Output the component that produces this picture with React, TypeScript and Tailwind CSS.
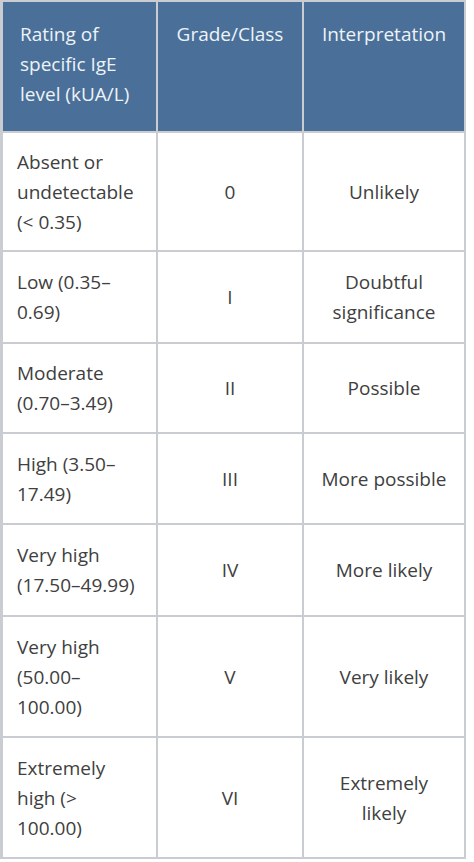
import React from "react";

const rows: { a: React.ReactNode; b: string; c: React.ReactNode }[] = [
  { a: <>Absent or<br />undetectable<br />(&lt; 0.35)</>, b: "0", c: "Unlikely" },
  { a: <>Low (0.35–<br />0.69)</>, b: "I", c: <>Doubtful<br />significance</> },
  { a: <>Moderate<br />(0.70–3.49)</>, b: "II", c: "Possible" },
  { a: <>High (3.50–<br />17.49)</>, b: "III", c: "More possible" },
  { a: <>Very high<br />(17.50–49.99)</>, b: "IV", c: "More likely" },
  { a: <>Very high<br />(50.00–<br />100.00)</>, b: "V", c: "Very likely" },
  { a: <>Extremely<br />high (&gt;<br />100.00)</>, b: "VI", c: <>Extremely<br />likely</> },
];

export default function App() {
  return (
    <div
      className="w-[474px] h-[862px] bg-white"
      style={{ fontFamily: '"Open Sans", "Noto Sans", sans-serif' }}
    >
      <div className="w-[466px] bg-[#c9cdd2] pl-[3px] pr-[2px] pt-[2px] pb-[2px] grid grid-cols-[153px_144px_160px] grid-rows-[129px_117px_90px_88px_89px_90px_119px_119px] gap-[2px] text-[19px] leading-[30px]">
        <div className="bg-[#4a7099] text-[#eef3f8] pl-[17px] pt-[17px] whitespace-nowrap">
          Rating of<br />specific IgE<br />level (kUA/L)
        </div>
        <div className="bg-[#4a7099] text-[#eef3f8] pt-[17px] text-center whitespace-nowrap">
          Grade/Class
        </div>
        <div className="bg-[#4a7099] text-[#eef3f8] pt-[17px] text-center whitespace-nowrap">
          Interpretation
        </div>
        {rows.map((r, i) => (
          <React.Fragment key={i}>
            <div className="bg-white text-[#404040] pl-[14px] flex items-center whitespace-nowrap">
              <div>{r.a}</div>
            </div>
            <div className="bg-white text-[#404040] flex items-center justify-center text-center whitespace-nowrap">
              <div>{r.b}</div>
            </div>
            <div className="bg-white text-[#404040] flex items-center justify-center text-center whitespace-nowrap">
              <div>{r.c}</div>
            </div>
          </React.Fragment>
        ))}
      </div>
    </div>
  );
}
